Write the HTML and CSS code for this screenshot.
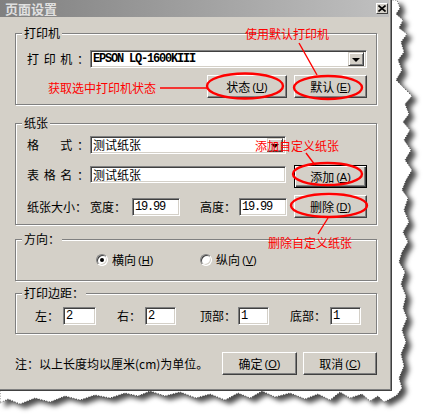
FILE: index.html
```html
<!DOCTYPE html>
<html lang="zh-CN">
<head>
  <meta charset="UTF-8" />
  <title>页面设置</title>
  <link rel="stylesheet" href="styles.css">
</head>
<body>
  <svg class="paper" width="429" height="415" viewBox="0 0 429 415">
    <defs>
      <filter id="shade" x="-5%" y="-5%" width="115%" height="115%">
        <feDropShadow dx="5" dy="4" stdDeviation="2.6" flood-color="#000" flood-opacity="0.7" />
      </filter>
    </defs>
    <path class="sheet" filter="url(#shade)" d="M0 0 H397 L400 8 L396 14 L403 20 L399 28 L407 34 L401 42 L404 52 L398 60 L402 70 L396 80 L404 88 L412 96 L405 104 L409 114 L403 122 L410 130 L404 140 L411 150 L405 160 L412 170 L406 180 L402 190 L408 198 L404 210 L409 222 L403 232 L408 242 L402 252 L399 262 L405 272 L401 284 L406 296 L403 308 L407 318 L402 330 L406 342 L401 354 L404 366 L399 378 L402 388 L397 395 L390 399 L384 402 L378 396 L370 401 L362 394 L350 398 L340 392 L330 400 L318 394 L305 399 L290 393 L275 397 L262 391 L250 398 L238 393 L225 400 L210 394 L196 398 L180 392 L165 396 L150 391 L138 396 L125 393 L110 398 L95 395 L80 400 L65 396 L50 402 L35 398 L20 404 L8 399 L0 403 Z" />
  </svg>

  <div class="dialog">
    <div class="titlebar">
      <span class="title">页面设置</span>
      <span class="close">
        <svg width="8" height="7" viewBox="0 0 8 7"><path d="M0.5 0.5 L7.5 6.5 M7.5 0.5 L0.5 6.5" stroke="#000" stroke-width="1.6" /></svg>
      </span>
    </div>

    <div class="content">
      <div class="group g-printer">
        <div class="legend">打印机</div>
        <div class="row r-printer">
          <span class="lbl"><i>打</i><i>印</i><i>机</i><i>：</i></span>
          <div class="field combo w-printer"><span class="val mono bold">EPSON LQ-1600KIII</span><span class="drop"><b></b></span></div>
        </div>
        <div class="row r-btns">
          <span class="btn b-status">状态 <span class="key">(<u>U</u>)</span></span>
          <span class="btn b-side">默认 <span class="key">(<u>E</u>)</span></span>
        </div>
      </div>

      <div class="group g-paper">
        <div class="legend">纸张</div>
        <div class="row r-form">
          <span class="lbl"><i>格</i><i></i><i>式</i><i>：</i></span>
          <div class="field combo w-form"><span class="val">测试纸张</span><span class="drop"><b></b></span></div>
        </div>
        <div class="row r-name">
          <span class="lbl"><i>表</i><i>格</i><i>名</i><i>：</i></span>
          <div class="field w-form"><span class="val">测试纸张</span></div>
          <span class="btn b-side default">添加 <span class="key">(<u>A</u>)</span></span>
        </div>
        <div class="row r-size">
          <span class="txt">纸张大小：</span>
          <span class="txt t-w">宽度：</span>
          <div class="field w-num"><span class="val mono">19.99</span></div>
          <span class="txt t-h">高度：</span>
          <div class="field w-num n-h"><span class="val mono">19.99</span></div>
          <span class="btn b-side b-del">删除 <span class="key">(<u>D</u>)</span></span>
        </div>
      </div>

      <div class="group g-dir">
        <div class="legend">方向：</div>
        <div class="row r-dir">
          <span class="radio-item"><span class="radio checked"></span>横向 <span class="key">(<u>H</u>)</span></span>
          <span class="radio-item"><span class="radio"></span>纵向 <span class="key">(<u>V</u>)</span></span>
        </div>
      </div>

      <div class="group g-margin">
        <div class="legend">打印边距：</div>
        <div class="row r-margin">
          <span class="txt">左：</span>
          <div class="field m-l"><span class="val mono">2</span></div>
          <span class="txt t-r">右：</span>
          <div class="field m-s"><span class="val mono">2</span></div>
          <span class="txt t-t">顶部：</span>
          <div class="field m-s m-t"><span class="val mono">1</span></div>
          <span class="txt t-b">底部：</span>
          <div class="field m-s"><span class="val mono">1</span></div>
        </div>
      </div>

      <div class="row r-foot">
        <span class="note">注：以上长度均以厘米(cm)为单位。</span>
        <span class="btn b-ok">确定 <span class="key">(<u>O</u>)</span></span>
        <span class="btn b-cancel">取消 <span class="key">(<u>C</u>)</span></span>
      </div>
    </div>
  </div>

  <svg class="marks" width="429" height="415" viewBox="0 0 429 415">
    <ellipse cx="245" cy="86" rx="38" ry="12.5" />
    <ellipse cx="328" cy="87.5" rx="34" ry="11.5" />
    <ellipse cx="327.5" cy="174" rx="34.5" ry="11" />
    <ellipse cx="329" cy="205.5" rx="38" ry="11.5" />
    <path d="M160 88 H207" />
    <path d="M299 43 L317 75" />
    <path d="M306 153 L315 165" />
    <path d="M328 218 L318 234" />
  </svg>
  <span class="note-red n1">获取选中打印机状态</span>
  <span class="note-red n2">使用默认打印机</span>
  <span class="note-red n3">添加自定义纸张</span>
  <span class="note-red n4">删除自定义纸张</span>
</body>
</html>
```

FILE: styles.css
```css
body {
  margin: 0;
  width: 429px;
  height: 415px;
  overflow: hidden;
  position: relative;
  background: #fff;
  font-family: "Noto Sans CJK SC", sans-serif;
  font-size: 12px;
  line-height: 14px;
  color: #000;
}
i {
  font-style: normal;
}
.paper {
  position: absolute;
  left: 0;
  top: 0;
}
.sheet {
  fill: #fff;
  stroke: #222;
  stroke-width: 0.8;
  stroke-dasharray: 1 1.6;
}
.dialog {
  position: relative;
  width: 391px;
  height: 390px;
  background: #d4d0c8;
  border-right: 1px solid #404040;
  border-bottom: 1px solid #404040;
  box-shadow: inset -1px -1px 0 #808080;
}
.titlebar {
  height: 17px;
  margin-right: 2px;
  display: flex;
  align-items: center;
  justify-content: space-between;
  background: linear-gradient(to right, #808080, #c0c0c0);
}
.title {
  padding-left: 5px;
  font-size: 13px;
  font-weight: bold;
  color: #e0e0e0;
}
.close {
  width: 12px;
  height: 11px;
  margin-right: 1px;
  box-sizing: border-box;
  display: flex;
  align-items: center;
  justify-content: center;
  background: #d4d0c8;
  border: 1px solid;
  border-color: #fff #404040 #404040 #fff;
}
.content {
  padding: 0 14px 0 15px;
}
.group {
  box-sizing: border-box;
  border: 1px solid #808080;
  box-shadow: inset 1px 1px 0 #fff, 1px 1px 0 #fff;
}
.legend {
  display: table;
  margin: -8px 0 0 6px;
  padding: 0 2px;
  background: #d4d0c8;
}
.row {
  display: flex;
  align-items: center;
}
.lbl {
  width: 62px;
  display: flex;
  justify-content: space-between;
}
.lbl i {
  width: 12px;
}
.key {
  font-family: "Liberation Sans", sans-serif;
  font-size: 11px;
  margin-left: 2px;
}
.field {
  box-sizing: border-box;
  height: 18px;
  display: flex;
  align-items: center;
  background: #fff;
  border: 1px solid;
  border-color: #808080 #fff #fff #808080;
  box-shadow: inset 1px 1px 0 #404040, inset -1px -1px 0 #d4d0c8;
  padding-left: 2px;
  overflow: hidden;
  white-space: nowrap;
}
.val {
  flex: 1;
}
.mono {
  font-family: "Liberation Mono", monospace;
  letter-spacing: -1.2px;
}
.bold {
  font-weight: bold;
}
.combo {
  padding-right: 2px;
}
.drop {
  box-sizing: border-box;
  width: 16px;
  height: 14px;
  display: flex;
  align-items: center;
  justify-content: center;
  background: #d4d0c8;
  border: 1px solid;
  border-color: #d4d0c8 #404040 #404040 #d4d0c8;
  box-shadow: inset 1px 1px 0 #fff, inset -1px -1px 0 #808080;
}
.drop b {
  width: 0;
  height: 0;
  border-left: 4px solid transparent;
  border-right: 4px solid transparent;
  border-top: 4px solid #000;
  margin-top: 1px;
}
.btn {
  box-sizing: border-box;
  height: 23px;
  display: flex;
  align-items: center;
  justify-content: center;
  background: #d4d0c8;
  border: 1px solid;
  border-color: #fff #404040 #404040 #fff;
  box-shadow: inset -1px -1px 0 #808080;
  white-space: nowrap;
}
.btn.default {
  border: 1px solid #000;
  box-shadow: inset 1px 1px 0 #fff, inset -1px -1px 0 #404040, inset -2px -2px 0 #808080;
}

/* 打印机 */
.g-printer {
  margin-top: 16px;
  height: 72px;
}
.r-printer {
  margin-top: 10px;
  padding-left: 11px;
}
.w-printer {
  width: 277px;
  margin-left: 1px;
}
.r-btns {
  margin-top: 7px;
  justify-content: flex-end;
  padding-right: 9px;
  gap: 7px;
}
.b-status {
  width: 80px;
}
.b-side {
  width: 73px;
}

/* 纸张 */
.g-paper {
  margin-top: 18px;
  height: 102px;
}
.r-form {
  margin-top: 6px;
  padding-left: 11px;
}
.w-form {
  width: 196px;
  margin-left: 1px;
}
.r-name {
  margin-top: 11px;
  padding-left: 11px;
  align-items: flex-start;
}
.r-name .lbl {
  margin-top: 3px;
}
.r-name .field {
  margin-top: 1px;
  height: 17px;
}
.r-name .btn {
  margin-left: 8px;
}
.r-size {
  margin-top: 7px;
  padding-left: 11px;
}
.t-w {
  margin-left: 3px;
}
.w-num {
  width: 48px;
  margin-left: 6px;
}
.t-h {
  margin-left: 20px;
}
.n-h {
  margin-left: 3px;
}
.b-del {
  margin-left: 7px;
}

/* 方向 */
.g-dir {
  margin-top: 14px;
  height: 42px;
}
.r-dir {
  margin-top: 7px;
  padding-left: 80px;
}
.radio-item {
  width: 104px;
  display: flex;
  align-items: center;
}
.radio {
  box-sizing: border-box;
  width: 12px;
  height: 12px;
  margin-right: 4px;
  border-radius: 50%;
  background: #fff;
  border: 1px solid;
  border-color: #808080 #fff #fff #808080;
  box-shadow: inset 1px 1px 0 #404040, inset -1px -1px 0 #d4d0c8;
  display: flex;
  align-items: center;
  justify-content: center;
}
.radio.checked::after {
  content: "";
  width: 4px;
  height: 4px;
  border-radius: 50%;
  background: #000;
}

/* 打印边距 */
.g-margin {
  margin-top: 12px;
  height: 41px;
}
.r-margin {
  margin-top: 7px;
  padding-left: 19px;
}
.m-l {
  width: 33px;
  margin-left: 4px;
}
.m-s {
  width: 31px;
  margin-left: 4px;
}
.m-t {
  margin-left: 2px;
}
.t-r {
  margin-left: 21px;
}
.t-t {
  margin-left: 24px;
}
.t-b {
  margin-left: 21px;
}

/* footer */
.r-foot {
  margin-top: 18px;
  height: 23px;
}
.note {
  flex: 1;
  margin-top: 1px;
}
.b-ok {
  width: 75px;
}
.b-cancel {
  width: 74px;
  margin-left: 6px;
}

/* red notes */
.marks {
  position: absolute;
  left: 0;
  top: 0;
  fill: none;
  stroke: #f00;
  stroke-width: 2.4;
}
.marks path {
  stroke-width: 1.4;
}
.note-red {
  position: absolute;
  color: #f00;
  line-height: 12px;
  white-space: nowrap;
}
.n1 {
  left: 48px;
  top: 82px;
}
.n2 {
  left: 245px;
  top: 28px;
}
.n3 {
  left: 255px;
  top: 140px;
}
.n4 {
  left: 268px;
  top: 237px;
}
```
